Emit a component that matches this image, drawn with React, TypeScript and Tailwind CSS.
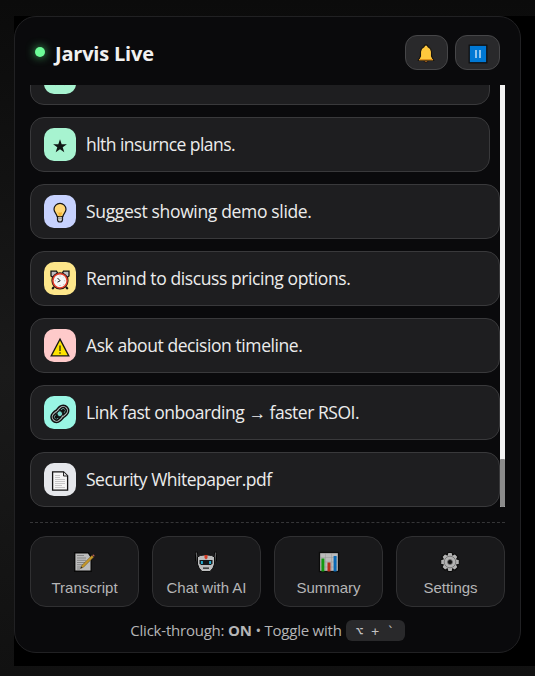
import type { ReactNode } from "react";

const sans = "font-['Open_Sans','Noto_Sans',sans-serif]";

function Star() {
  return (
    <svg width="16" height="16" viewBox="0 0 16 16">
      <path fill="#101614" d="M8 1.3l1.7 4.9h5.2l-4.2 3 1.6 5L8 11.2l-4.3 3 1.6-5-4.2-3h5.2z" />
    </svg>
  );
}

function Bulb() {
  return (
    <svg width="20" height="22" viewBox="0 0 20 22" className="mr-px">
      <path d="M7.500 13.500h5v4.200Q12.300 20 10 20t-2.500-2.300z" fill="#c9c9c9" stroke="#151515" strokeWidth="1.200" />
      <path d="M10 1.300a6 6 0 0 1 6 6c0 3-2.500 4-3.200 7.200H7.200C6.500 11.300 4 10.300 4 7.300a6 6 0 0 1 6-6z" fill="#ffd777" stroke="#151515" strokeWidth="1.200" />
      <path d="M8 10.500l1.200 1.200.800-1 .800 1 1.200-1.200M9.200 11.500v3M10.800 11.500v3" fill="none" stroke="#f5a915" strokeWidth="1" />
      <path d="M7.800 16.300h4.400" stroke="#8b8b8b" strokeWidth=".8" />
    </svg>
  );
}

function Clock() {
  return (
    <svg width="20" height="20" viewBox="0 0 20 20">
      <path d="M4 17l-1.800 2M16 17l1.800 2" stroke="#111" strokeWidth="2" />
      <path d="M1 6V1.200h5.500L7.500 3 2.800 7.500zM19 6V1.200h-5.500L12.500 3l4.700 4.500z" fill="#bebec2" stroke="#151515" strokeWidth="1.300" />
      <circle cx="10" cy="10.800" r="7.400" fill="#f5f5f5" stroke="#251414" strokeWidth="2.400" />
      <circle cx="10" cy="10.800" r="7.100" fill="#f5f5f5" stroke="#e6422d" strokeWidth="1.500" />
      <path d="M7.500 8l2.700 2.800-2.700 1.300" fill="none" stroke="#222" strokeWidth="1" />
      <path d="M10 5.500v1M10 15v1M4.800 10.800h1M14.200 10.800h1M13.500 7.300l.6-.6M13.500 14.300l.6.6" stroke="#999" strokeWidth=".8" />
    </svg>
  );
}

function Warning() {
  return (
    <svg width="20" height="20" viewBox="0 0 20 20">
      <path d="M10 2.100L18.800 18.900H1.200z" fill="#fde300" stroke="#171717" strokeWidth="1.300" />
      <path d="M10 8.500v5.500M10 15.200v1.500" stroke="#171717" strokeWidth="1.200" />
    </svg>
  );
}

function LinkIcon() {
  return (
    <svg width="22" height="22" viewBox="0 0 22 22" fill="none">
      <g transform="rotate(-43 11 11)">
        <rect x="2.200" y="6.500" width="11" height="8.500" rx="4.200" stroke="#121212" strokeWidth="4" />
        <rect x="8.800" y="6.500" width="11" height="8.500" rx="4.200" stroke="#121212" strokeWidth="4" />
        <rect x="2.200" y="6.500" width="11" height="8.500" rx="4.200" stroke="#b7c3c1" strokeWidth="1" />
        <rect x="8.800" y="6.500" width="11" height="8.500" rx="4.200" stroke="#b7c3c1" strokeWidth="1" />
        <rect x="4.500" y="9" width="4" height="3.500" rx="1.700" fill="#111" />
        <rect x="13.500" y="9" width="4" height="3.500" rx="1.700" fill="#111" />
        <circle cx="11" cy="10.700" r="2.800" fill="#75d9cc" stroke="#151515" />
      </g>
    </svg>
  );
}

function Page() {
  return (
    <svg width="18" height="20" viewBox="0 0 18 20">
      <path d="M1.600.8h11l4 4v14.400h-15z" fill="#f5f5f5" stroke="#111" strokeWidth="1.300" />
      <path d="M12.500 1v4h4" fill="#ddd" stroke="#111" strokeWidth=".9" />
      <path d="M4 4.500h5M4 6.500h5M4 8.500h10M4 10.500h10M4 12.500h10M4 14.500h7M4 16.500h10" stroke="#c2c2c2" strokeWidth=".9" />
    </svg>
  );
}

function Bell() {
  return (
    <svg width="18" height="20" viewBox="0 0 18 20" className="mr-px">
      <path d="M7 16h4v1.500q-2 2-4 0z" fill="#b36421" stroke="#141414" strokeWidth="1" />
      <path d="M7.500 1.500q1.500-1.200 3 0l.5 1.300q3.200 1.400 3.500 5V12l2.200 4.500H1.300L3.500 12V7.800q.3-3.600 3.500-5z" fill="#ffc83d" stroke="#171411" strokeWidth="1.100" />
      <path d="M2 15.700h14" stroke="#df911b" strokeWidth="1.400" />
    </svg>
  );
}

function Pause() {
  return (
    <svg width="20" height="20" viewBox="0 0 20 20">
      <rect x="1.200" y="1.200" width="17.600" height="17.600" fill="#0078d4" stroke="#101010" strokeWidth="1.300" />
      <path d="M8 6v8M12 6v8" stroke="#a9d2f1" strokeWidth="1.700" />
    </svg>
  );
}

function Memo() {
  return (
    <svg width="24" height="24" viewBox="0 0 24 24" className="mr-0.5">
      <path d="M2.700 2.700h13.500l3 4.300v14.300H2.700z" fill="#bcbcbc" stroke="#080808" strokeWidth="1.400" />
      <path d="M5 5.500h7M5 8h9M5 10.300h9M5 12.500h8M5 14.700h6M5 17h4M5 19h3" stroke="#858585" strokeWidth="1" />
      <path d="M8.500 18.500l1.300-3L20 5.200l1.800 1.700-10.300 10.300z" fill="#c79929" stroke="#5f4a24" strokeWidth=".5" />
      <path d="M20 5.200l1.200-1.200 1.800 1.700-1.200 1.200z" fill="#b55f59" stroke="#111" strokeWidth=".5" />
      <path d="M8.500 18.500l.8-2 1.200 1.200z" fill="#222" />
    </svg>
  );
}

function Robot() {
  return (
    <svg width="24" height="24" viewBox="0 0 24 24" className="mr-px">
      <path d="M2.300 1.800v9.500M21.700 1.800v9.500" stroke="#050505" strokeWidth="2.600" />
      <path d="M2.300 2.500l.9 9M21.700 2.500l-.9 9" stroke="#606163" strokeWidth="1.200" />
      <path d="M3.500 7Q5 5 12 4.800q7 .2 8.500 2.200V14q-.8 4.500-4.500 7.500H8Q4.300 18.500 3.500 14z" fill="#bcbdbe" stroke="#0b0b0b" strokeWidth="1" />
      <path d="M10.500 5h3v3L12 9.500 10.500 8z" fill="#d43d27" />
      <path d="M5.500 10h13v3.200L17 15H7l-1.500-1.800z" fill="#131619" />
      <path d="M7.900 11v3M16.100 11v3" stroke="#25a9cc" strokeWidth="2" />
      <path d="M9 17.500h6v1.300H9z" fill="#242424" />
    </svg>
  );
}

function Chart() {
  return (
    <svg width="24" height="24" viewBox="0 0 24 24">
      <rect x="2.500" y="2.500" width="19" height="19" fill="#bbb" stroke="#0b0b0b" strokeWidth="1.300" />
      <path d="M3 7.500h18M3 12h18M3 17h18M8.500 3v18M14.500 3v18" stroke="#999" strokeWidth=".5" />
      <path d="M5.900 8.500v13" stroke="#13980f" strokeWidth="3" />
      <path d="M12 12.500v9" stroke="#b92d1b" strokeWidth="3" />
      <path d="M18.100 6v15.500" stroke="#0868b5" strokeWidth="3" />
    </svg>
  );
}

function Gear() {
  return (
    <svg width="24" height="24" viewBox="0 0 24 24" className="mr-0.5">
      <path d="M9.900 2.500h4.200l.6 2.500 2.200-1.300 3.100 3.100-1.300 2.200 2.600.8v4.400l-2.600.7 1.300 2.200-3.100 3.100-2.200-1.300-.6 2.600H9.900l-.7-2.600L7 20.200l-3.100-3.100 1.300-2.200-2.500-.7V9.800L5.200 9 3.900 6.800 7 3.700 9.200 5z" fill="#b2b2b2" stroke="#0b0b0b" strokeWidth="1.100" />
      <circle cx="12" cy="12" r="5.800" fill="none" stroke="#6b6b6b" strokeWidth=".8" />
      <circle cx="12" cy="12" r="2.500" fill="#111" stroke="#777" strokeWidth=".7" />
    </svg>
  );
}

type Item = { text: string; icon: ReactNode; tint: string; width: string; track: string };

const items: Item[] = [
  { text: "", icon: <Star />, tint: "bg-[#a7f3d0]", width: "w-[460px]", track: "" },
  { text: "hlth insurnce plans.", icon: <Star />, tint: "bg-[#a7f3d0]", width: "w-[460px]", track: "tracking-[-0.55px]" },
  { text: "Suggest showing demo slide.", icon: <Bulb />, tint: "bg-[#c7d2fe]", width: "w-[470px]", track: "tracking-[-0.34px]" },
  { text: "Remind to discuss pricing options.", icon: <Clock />, tint: "bg-[#fde68a]", width: "w-[470px]", track: "tracking-[-0.41px]" },
  { text: "Ask about decision timeline.", icon: <Warning />, tint: "bg-[#fecaca]", width: "w-[470px]", track: "tracking-[-0.42px]" },
  { text: "Link fast onboarding → faster RSOI.", icon: <LinkIcon />, tint: "bg-[#99f6e4]", width: "w-[470px]", track: "tracking-[-0.46px]" },
  { text: "Security Whitepaper.pdf", icon: <Page />, tint: "bg-[#e5e7eb]", width: "w-[470px]", track: "tracking-[-0.5px]" },
];

const actions = [
  { label: "Transcript", icon: <Memo /> },
  { label: "Chat with AI", icon: <Robot /> },
  { label: "Summary", icon: <Chart /> },
  { label: "Settings", icon: <Gear /> },
];

export default function App() {
  return (
    <div className={`h-[676px] w-[535px] overflow-hidden bg-linear-to-b from-[#0b0b0b] via-[#1a1a1a] via-55% to-[#111] pt-4 pl-3.5 ${sans}`}>
      <div className="h-[650px] w-[521px] bg-black">
        <main className="flex h-[637px] w-[507px] flex-col rounded-[22px] border border-[#212123] bg-[#0a0a0c] px-[15px]">
          <header className="flex h-[68px] shrink-0 items-center pt-[3px] pr-[5px] pl-[5px]">
            <span className="mb-px size-2.5 rounded-full bg-[#6dfc98] shadow-[0_0_10px_#48c46b]" />
            <h1 className="mt-[3px] ml-2.5 text-[20px] leading-6 font-bold tracking-[-0.2px] text-[#f1f1f1]">Jarvis Live</h1>
            <div className="ml-auto flex gap-[7px]">
              <button className="flex h-[35px] w-[43px] items-center justify-center rounded-xl border border-[#464648] bg-[#29292b] pt-0.5"><Bell /></button>
              <button className="flex h-[35px] w-[45px] items-center justify-center rounded-xl border border-[#464648] bg-[#29292b] pt-0.5"><Pause /></button>
            </div>
          </header>

          <section className="flex h-[422px] shrink-0 overflow-hidden">
            <div className="flex w-[470px] flex-col justify-end gap-3">
              {items.map((item, i) => (
                <div key={i} className={`flex h-[55px] shrink-0 items-center rounded-[14px] border border-[#39393b] bg-[#1e1e20] pl-[13px] ${item.width}`}>
                  <span className={`flex h-[33px] w-8 items-center justify-center rounded-[10px] pt-0.5 ${item.tint}`}>{item.icon}</span>
                  <span className={`-mt-0.5 ml-2.5 text-[17.5px] leading-6 whitespace-nowrap text-[#ececec] ${item.track}`}>{item.text}</span>
                </div>
              ))}
            </div>
            <div className="flex w-[5px] flex-col justify-end bg-[#f3f3f3]">
              <div className="h-12 rounded-[1px] bg-[#8b8b8b]" />
            </div>
          </section>

          <nav className="mt-[15px] grid shrink-0 grid-cols-4 gap-[13px] border-t border-dashed border-[#363638] pt-[13px]">
            {actions.map((action) => (
              <button key={action.label} className="flex h-[71px] flex-col items-center rounded-2xl border border-[#303032] bg-[#19191b] pt-[13px]">
                {action.icon}
                <span className="mt-1 font-['Liberation_Sans',sans-serif] text-[15px] leading-5 whitespace-nowrap text-[#b5b5b6]">{action.label}</span>
              </button>
            ))}
          </nav>

          <footer className="mt-[13px] flex h-[21px] shrink-0 items-center justify-center gap-1 text-[#b5b5b6]">
            <span className="-mt-0.5 text-[15px] leading-5 tracking-[-0.22px] whitespace-nowrap">Click-through: <b>ON</b> • Toggle with</span>
            <kbd className="flex h-[21px] w-[59px] items-center justify-center rounded-[6px] bg-[#29292b] pt-0.5 font-['DejaVu_Sans_Mono',monospace] text-[13px] whitespace-pre text-[#c1c1c2]">⌥ + `</kbd>
          </footer>
        </main>
      </div>
    </div>
  );
}
